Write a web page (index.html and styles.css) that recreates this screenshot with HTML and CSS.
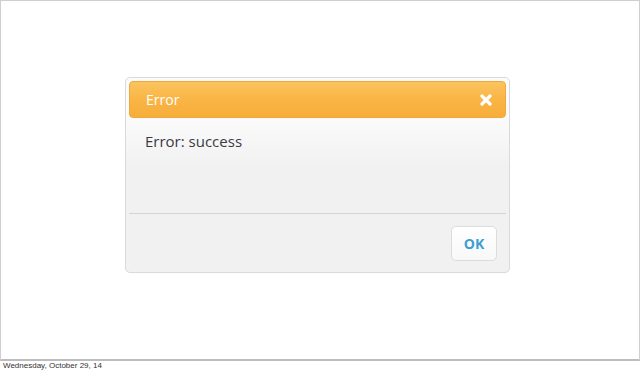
FILE: index.html
```html
<!DOCTYPE html>
<html>
<head>
<meta charset="utf-8">
<link rel="stylesheet" href="styles.css">
</head>
<body>
<div class="slide">
  <div class="dialog">
    <div class="dialog-header">
      <span class="dialog-title">Error</span>
      <span class="dialog-close">
        <svg width="12" height="12" viewBox="0 0 12 12"><path d="M2 2 L10 10 M10 2 L2 10" stroke="#fff" stroke-width="3.2" stroke-linecap="round"/></svg>
      </span>
    </div>
    <div class="dialog-body">Error: success</div>
    <div class="dialog-footer">
      <button class="ok-btn">OK</button>
    </div>
  </div>
</div>
<div class="date">Wednesday, October 29, 14</div>
</body>
</html>
```
FILE: styles.css
```css
html, body {
  margin: 0;
  padding: 0;
  background: #fff;
}
.slide {
  box-sizing: border-box;
  width: 640px;
  height: 361px;
  border: 1px solid #cfcfcf;
  border-bottom: 2px solid #bdbdbd;
  display: flex;
  justify-content: flex-start;
  padding-top: 76px;
  padding-left: 124px;
}
.dialog {
  box-sizing: border-box;
  width: 385px;
  height: 196px;
  border: 1px solid #dadada;
  border-radius: 5px;
  background: linear-gradient(#fcfcfc 0px, #fafafa 45px, #f1f1f1 90px, #f1f1f1 100%);
  padding: 3px;
  display: flex;
  flex-direction: column;
  box-shadow: 0 0 1px rgba(0,0,0,0.05);
}
.dialog-header {
  height: 37px;
  box-sizing: border-box;
  border-radius: 4px;
  background: linear-gradient(#fbc45f, #f9b545 50%, #f7ad3a);
  border: 1px solid #f0a83a;
  display: flex;
  align-items: center;
  justify-content: space-between;
  padding: 0 13px 0 16px;
}
.dialog-title {
  font-family: "Open Sans", sans-serif;
  font-size: 14px;
  color: #fff;
}
.dialog-close {
  display: flex;
  align-items: center;
}
.dialog-body {
  font-family: "Open Sans", sans-serif;
  font-size: 15px;
  color: #3a3a44;
  padding: 13px 16px 0;
  height: 96px;
  box-sizing: border-box;
  border-bottom: 1px solid #d4d4d4;
}
.dialog-footer {
  display: flex;
  justify-content: flex-end;
  padding: 12px 9px 0 0;
}
.ok-btn {
  width: 46px;
  height: 35px;
  border: 1px solid #dcdcdc;
  border-radius: 5px;
  background: linear-gradient(#ffffff, #f8f8f8);
  color: #3b9fd1;
  font-family: "Open Sans", sans-serif;
  font-weight: 700;
  font-size: 14px;
  padding: 0;
}
.date {
  font-family: "Liberation Sans", Arial, sans-serif;
  font-size: 8px;
  color: #333;
  padding: 0 0 0 3px;
  line-height: 9px;
}
```
